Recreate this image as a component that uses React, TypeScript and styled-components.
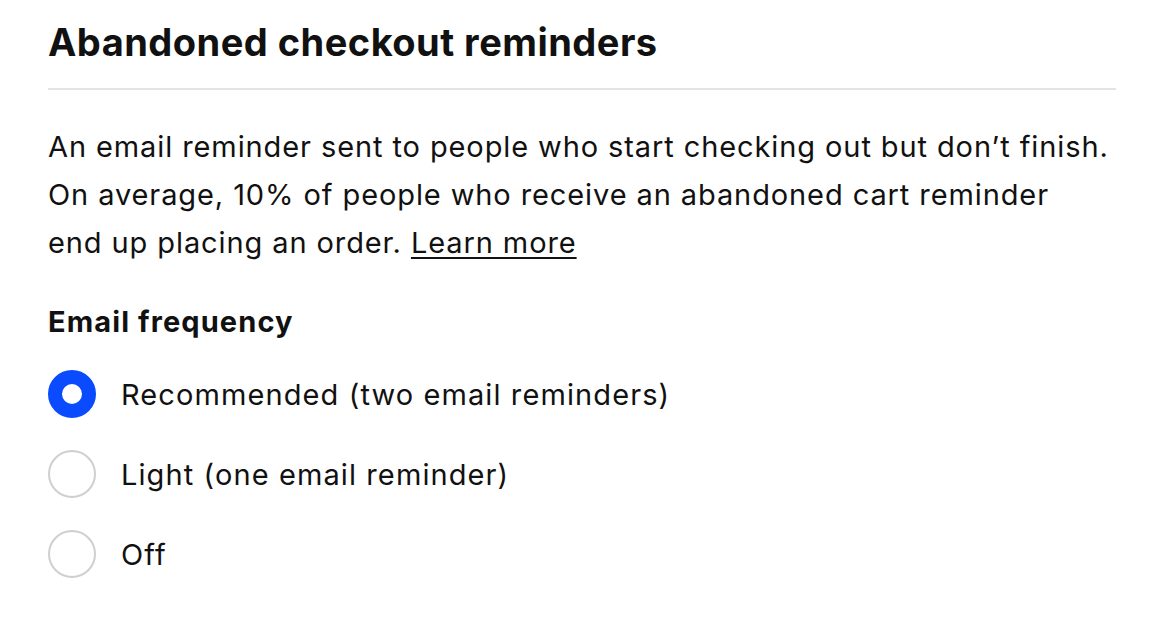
import { useState } from 'react';
import styled, { createGlobalStyle } from 'styled-components';

const GlobalStyle = createGlobalStyle`
  body {
    margin: 0;
    background: #ffffff;
    font-family: Inter, 'Noto Sans', sans-serif;
    color: #111111;
  }
`;

const Page = styled.div`
  width: 1068px;
  padding: 14px 0 0 48px;
`;

const Header = styled.div`
  padding-bottom: 18px;
  border-bottom: 2px solid #e4e4e4;
`;

const Title = styled.h2`
  margin: 0;
  font-size: 38px;
  line-height: 56px;
  font-weight: 700;
  letter-spacing: 0.48px;
`;

const Description = styled.p`
  margin: 33px 0 0;
  font-size: 29px;
  line-height: 48px;
  font-weight: 400;
  letter-spacing: 0.9px;
`;

const Link = styled.a`
  color: inherit;
  text-decoration: underline;
  text-underline-offset: 4px;
  text-decoration-thickness: 2px;
`;

const Fieldset = styled.fieldset`
  margin: 35px 0 0;
  padding: 0;
  border: none;
`;

const Legend = styled.legend`
  padding: 0;
  font-size: 29px;
  line-height: 40px;
  font-weight: 700;
  letter-spacing: 1.1px;
`;

const Options = styled.div`
  display: flex;
  flex-direction: column;
  gap: 32px;
  margin-top: 28px;
`;

const Option = styled.label`
  display: flex;
  align-items: center;
  gap: 25px;
  font-size: 29px;
  line-height: 47px;
  letter-spacing: 1.1px;
  cursor: pointer;
`;

const Radio = styled.span<{ checked: boolean }>`
  box-sizing: border-box;
  width: 48px;
  height: 48px;
  border-radius: 50%;
  flex-shrink: 0;
  background: #ffffff;
  border: ${({ checked }) => (checked ? '14px solid #0a4bff' : '2px solid #cfcfcf')};
`;

const options = [
  'Recommended (two email reminders)',
  'Light (one email reminder)',
  'Off',
];

export default function App() {
  const [selected, setSelected] = useState(0);

  return (
    <Page>
      <GlobalStyle />
      <Header>
        <Title>Abandoned checkout reminders</Title>
      </Header>
      <Description>
        An email reminder sent to people who start checking out but don’t finish.
        <br />
        On average, 10% of people who receive an abandoned cart reminder
        <br />
        end up placing an order. <Link href="#">Learn more</Link>
      </Description>
      <Fieldset>
        <Legend>Email frequency</Legend>
        <Options>
          {options.map((label, i) => (
            <Option key={label} onClick={() => setSelected(i)}>
              <Radio checked={selected === i} />
              {label}
            </Option>
          ))}
        </Options>
      </Fieldset>
    </Page>
  );
}
